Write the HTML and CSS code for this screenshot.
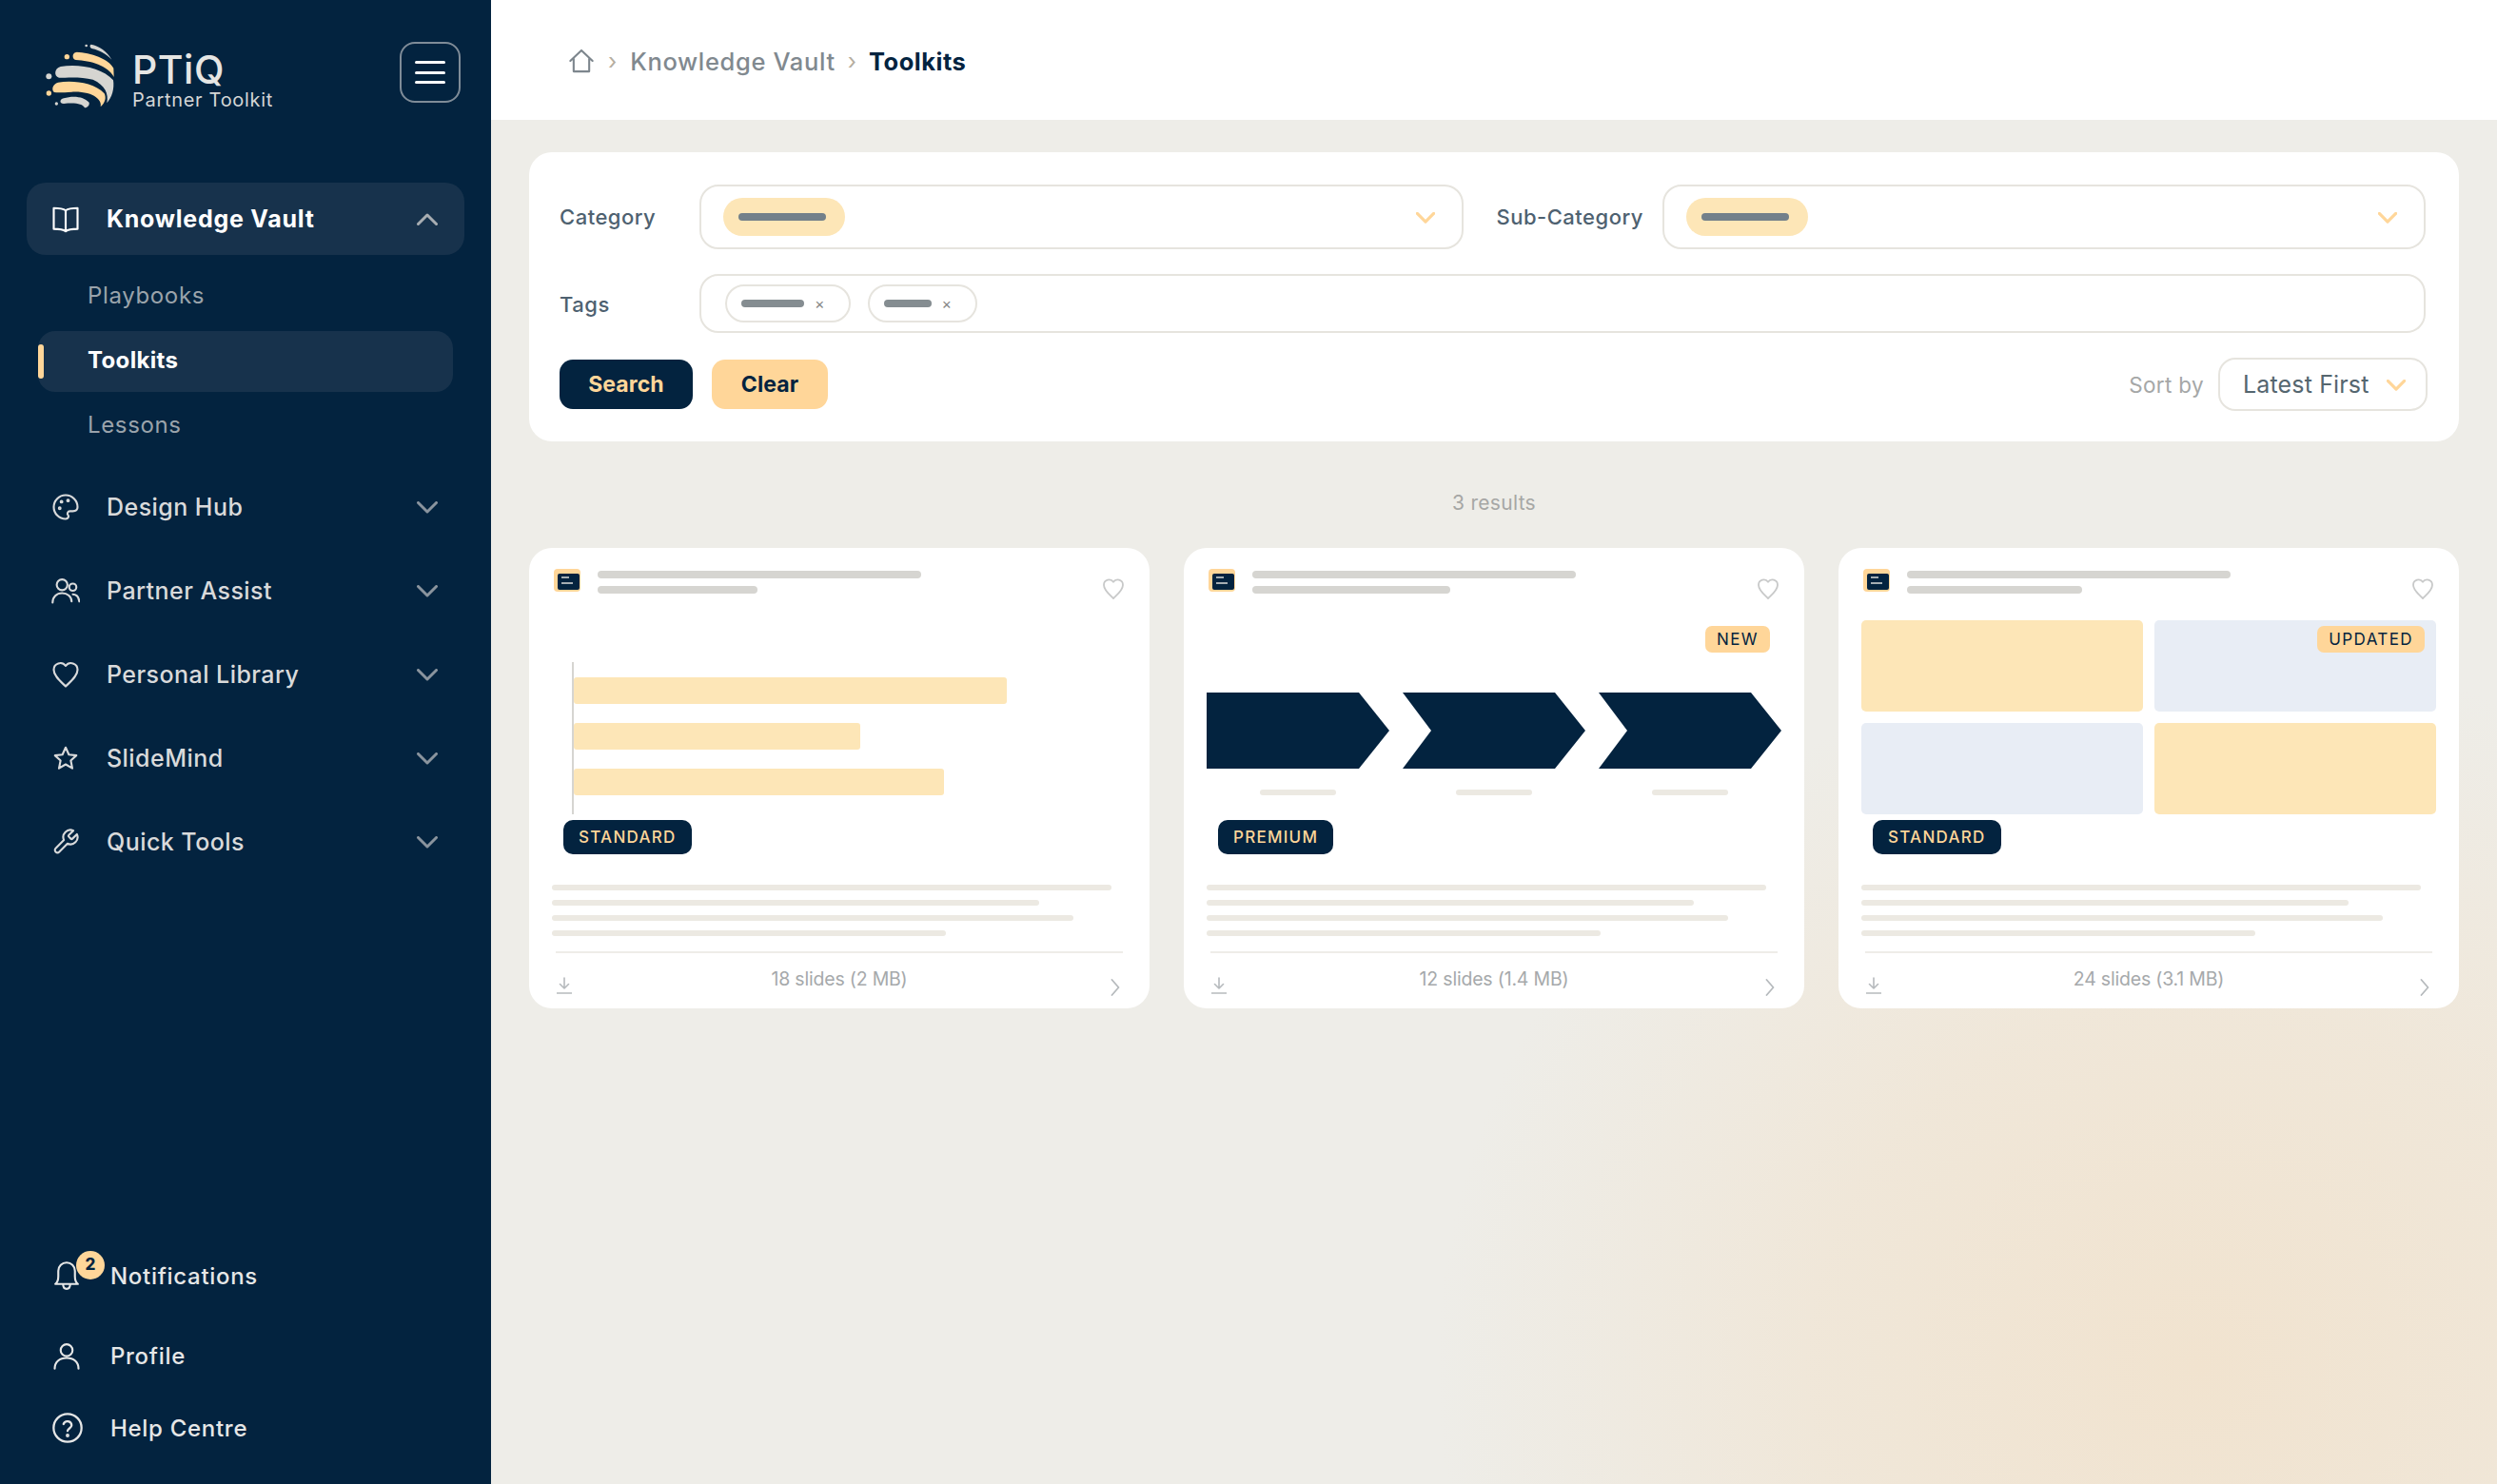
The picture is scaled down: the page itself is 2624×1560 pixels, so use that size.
FILE: index.html
```html
<!DOCTYPE html>
<html lang="en">
<head>
<meta charset="utf-8">
<title>PTiQ Partner Toolkit</title>
<link rel="stylesheet" href="styles.css">
</head>
<body>
<svg class="defs" width="0" height="0" aria-hidden="true">
  <symbol id="i-down" viewBox="0 0 22 13"><path d="M1.500 1.500l9.500 9.500 9.500-9.500"/></symbol>
  <symbol id="i-heart" viewBox="0 0 24 24"><path d="M12 22C8 18 2 13.500 2 8a5.500 5.500 0 0 1 10-3.200A5.500 5.500 0 0 1 22 8c0 5.500-6 10-10 14z"/></symbol>
  <symbol id="i-dl" viewBox="0 0 16 18"><path d="M8 1v10.500M3.500 7.500L8 12l4.500-4.500M.5 17h15"/></symbol>
  <symbol id="i-right" viewBox="0 0 10 18"><path d="M1.500 1l7 8-7 8"/></symbol>
  <symbol id="i-doc" viewBox="0 0 28 24"><rect width="28" height="24" rx="4" class="doc-o"/><rect x="4" y="5" width="23" height="17" rx="2" class="doc-i"/><rect x="8" y="8" width="8" height="2" class="doc-l"/><rect x="8" y="14" width="12" height="2" class="doc-l"/></symbol>
</svg>
<div class="app">
  <aside class="sidebar">
    <div class="brand">
      <svg class="logo" viewBox="80 80 222 210">
        <g class="lg"><path d="M226 85C252 90 276 106 291 133C272 114 250 103 231 99C223 97 220 88 226 85Z"/><path d="M130 155C185 145 262 158 296 198C300 225 292 252 276 270C282 240 270 214 232 196C195 186 150 190 125 190C108 186 110 160 130 155Z"/><path d="M140 255C170 245 205 250 220 268C222 276 215 284 206 285C200 272 175 268 140 272C126 272 126 258 140 255Z"/><circle cx="93" cy="186" r="9"/><circle cx="117" cy="272" r="5"/><circle cx="211" cy="89" r="4"/></g>
        <g class="lo"><path d="M180 109C225 111 282 130 297 160L298 188C280 152 225 136 178 134C165 132 166 110 180 110Z"/><path d="M122 205C170 198 235 205 268 240C274 252 272 268 256 282C262 262 235 232 165 235C140 237 120 238 110 236C100 228 105 210 122 205Z"/><circle cx="150" cy="124" r="8"/><circle cx="93" cy="239" r="8"/></g>
      </svg>
      <div class="brand-text"><div class="brand-name">PTiQ</div><div class="brand-sub">Partner Toolkit</div></div>
      <button class="menu-btn" aria-label="Menu"><span></span><span></span><span></span></button>
    </div>
    <nav class="nav">
      <a class="nav-item is-open">
        <svg class="ico" viewBox="0 0 24 24"><path d="M12 5C10 3.500 7 3 2 3v17.500c5 0 8 .5 10 2 2-1.500 5-2 10-2V3c-5 0-8 .5-10 2zM12 5v17"/></svg>
        <span class="nav-label">Knowledge Vault</span>
        <svg class="chev chev-up"><use href="#i-down"/></svg>
      </a>
      <div class="sub">
        <a class="sub-item">Playbooks</a>
        <a class="sub-item is-active">Toolkits</a>
        <a class="sub-item">Lessons</a>
      </div>
      <a class="nav-item">
        <svg class="ico" viewBox="0 0 24 24"><path d="M12 22a10 10 0 1 1 10-10c0 2.500-1.500 3.500-4 3.500h-2.500a2 2 0 0 0-1.500 3.300c.6.7.6 1.300.2 1.900-.4.700-1.100 1.300-2.200 1.300z"/><circle cx="7" cy="13" r=".7"/><circle cx="8.500" cy="7.500" r=".7"/><circle cx="14" cy="6.500" r=".7"/></svg>
        <span class="nav-label">Design Hub</span>
        <svg class="chev"><use href="#i-down"/></svg>
      </a>
      <a class="nav-item">
        <svg class="ico" viewBox="0 0 24 24"><circle cx="9" cy="7" r="4.500"/><circle cx="18" cy="9" r="3"/><path d="M1 22c0-5 3.500-8 8-8s8 3 8 7M18 15c3 0 5 2.500 5.500 6"/></svg>
        <span class="nav-label">Partner Assist</span>
        <svg class="chev"><use href="#i-down"/></svg>
      </a>
      <a class="nav-item">
        <svg class="ico" viewBox="0 0 24 24"><use href="#i-heart"/></svg>
        <span class="nav-label">Personal Library</span>
        <svg class="chev"><use href="#i-down"/></svg>
      </a>
      <a class="nav-item">
        <svg class="ico" viewBox="0 0 24 24"><path d="M12 3l2.700 6 6.300.7-4.700 4.300 1.300 6.500-5.600-3.300-5.600 3.300 1.300-6.500L3 9.700 9.300 9z"/></svg>
        <span class="nav-label">SlideMind</span>
        <svg class="chev"><use href="#i-down"/></svg>
      </a>
      <a class="nav-item">
        <svg class="ico" viewBox="0 0 24 24"><path d="M14.700 6.300a1 1 0 0 0 0 1.400l1.600 1.600a1 1 0 0 0 1.400 0l3.770-3.770a6 6 0 0 1-7.940 7.940l-6.910 6.910a2.120 2.120 0 0 1-3-3l6.910-6.910a6 6 0 0 1 7.940-7.940l-3.760 3.760z"/></svg>
        <span class="nav-label">Quick Tools</span>
        <svg class="chev"><use href="#i-down"/></svg>
      </a>
    </nav>
    <div class="foot-nav">
      <a class="foot-item foot-notif">
        <span class="bell-wrap">
          <svg class="ico" viewBox="0 0 24 24"><path d="M2.500 19c2-1.500 2.500-3 2.500-6.500V8a7 7 0 0 1 14 0v4.500c0 3.500.5 5 2.500 6.500zM9 19c0 5.500 6 5.500 6 0"/></svg>
          <span class="bell-badge">2</span>
        </span>
        <span>Notifications</span>
      </a>
      <a class="foot-item">
        <svg class="ico" viewBox="0 0 24 24"><circle cx="12" cy="7.500" r="5"/><path d="M2 23c0-5.500 4-9 10-9s10 3.500 10 9"/></svg>
        <span>Profile</span>
      </a>
      <a class="foot-item">
        <svg class="ico ico-help" viewBox="0 0 24 24"><circle cx="12" cy="12" r="11"/><path d="M8.800 9a3.300 3.300 0 0 1 6.400 1c0 2.200-3.200 2.500-3.200 4.500"/><circle cx="12" cy="18" r=".6"/></svg>
        <span>Help Centre</span>
      </a>
    </div>
  </aside>

  <main class="main">
    <header class="topbar">
      <svg class="home" viewBox="0 0 24 24"><path d="M2 12L12 2.500 22 12M5 10v11.500h14V10"/></svg>
      <span class="crumb-sep">›</span>
      <span class="crumb">Knowledge Vault</span>
      <span class="crumb-sep crumb-sep-b">›</span>
      <span class="crumb-now">Toolkits</span>
    </header>
    <div class="content">
      <section class="filters">
        <div class="frow frow-1">
          <label class="flabel flabel-a">Category</label>
          <div class="select">
            <span class="pill"><i class="pill-bar"></i></span>
            <svg class="schev"><use href="#i-down"/></svg>
          </div>
          <label class="flabel flabel-b">Sub-Category</label>
          <div class="select">
            <span class="pill"><i class="pill-bar"></i></span>
            <svg class="schev"><use href="#i-down"/></svg>
          </div>
        </div>
        <div class="frow frow-2">
          <label class="flabel flabel-a flabel-tags">Tags</label>
          <div class="tagbox">
            <span class="chip"><i class="chip-bar chip-bar-a"></i><span class="chip-x">×</span></span>
            <span class="chip"><i class="chip-bar chip-bar-b"></i><span class="chip-x">×</span></span>
          </div>
        </div>
        <div class="frow frow-3">
          <button class="btn btn-dark">Search</button>
          <button class="btn btn-light">Clear</button>
          <span class="sort-label">Sort by</span>
          <div class="sort">Latest First<svg class="schev"><use href="#i-down"/></svg></div>
        </div>
      </section>

      <div class="results">3 results</div>

      <section class="cards">
        <article class="card">
          <div class="card-head">
            <svg class="doc"><use href="#i-doc"/></svg>
            <div class="titles"><i class="t1"></i><i class="t2 t2-a"></i></div>
            <svg class="fav"><use href="#i-heart"/></svg>
          </div>
          <div class="preview">
            <div class="chart">
              <i class="bar" style="width:455px"></i>
              <i class="bar" style="width:301px"></i>
              <i class="bar" style="width:389px"></i>
            </div>
          </div>
          <span class="type">STANDARD</span>
          <div class="lines"><i class="l1"></i><i class="l2"></i><i class="l3"></i><i class="l4"></i></div>
          <div class="card-foot">
            <svg class="dl"><use href="#i-dl"/></svg>
            <span class="meta">18 slides (2 MB)</span>
            <svg class="go"><use href="#i-right"/></svg>
          </div>
        </article>

        <article class="card">
          <div class="card-head">
            <svg class="doc"><use href="#i-doc"/></svg>
            <div class="titles"><i class="t1"></i><i class="t2 t2-b"></i></div>
            <svg class="fav"><use href="#i-heart"/></svg>
          </div>
          <div class="preview preview-flow">
            <span class="status">NEW</span>
            <div class="step"><i class="arrow arrow-first"></i><i class="step-label"></i></div>
            <div class="step"><i class="arrow"></i><i class="step-label"></i></div>
            <div class="step"><i class="arrow"></i><i class="step-label"></i></div>
          </div>
          <span class="type">PREMIUM</span>
          <div class="lines"><i class="l1"></i><i class="l2"></i><i class="l3"></i><i class="l4"></i></div>
          <div class="card-foot">
            <svg class="dl"><use href="#i-dl"/></svg>
            <span class="meta">12 slides (1.4 MB)</span>
            <svg class="go"><use href="#i-right"/></svg>
          </div>
        </article>

        <article class="card">
          <div class="card-head">
            <svg class="doc"><use href="#i-doc"/></svg>
            <div class="titles"><i class="t1"></i><i class="t2 t2-c"></i></div>
            <svg class="fav"><use href="#i-heart"/></svg>
          </div>
          <div class="preview preview-grid">
            <span class="status">UPDATED</span>
            <i class="cell cell-y"></i><i class="cell cell-b"></i>
            <i class="cell cell-b"></i><i class="cell cell-y"></i>
          </div>
          <span class="type">STANDARD</span>
          <div class="lines"><i class="l1"></i><i class="l2"></i><i class="l3"></i><i class="l4"></i></div>
          <div class="card-foot">
            <svg class="dl"><use href="#i-dl"/></svg>
            <span class="meta">24 slides (3.1 MB)</span>
            <svg class="go"><use href="#i-right"/></svg>
          </div>
        </article>
      </section>
    </div>
  </main>
</div>
</body>
</html>
```
FILE: styles.css
```css
* { box-sizing: border-box; }
html, body { margin: 0; height: 100%; }
body { font-family: "Inter", "Liberation Sans", sans-serif; color: #03233f; }
i { display: block; font-style: normal; }
a { display: flex; }
button { font-family: inherit; border: 0; padding: 0; }
.defs { position: absolute; }

.app { display: flex; width: 2624px; height: 1560px; overflow: hidden; }

/* sidebar */
.sidebar { width: 516px; flex: none; background: #03233f; display: flex; flex-direction: column; color: #d9dadb; }
.brand { display: flex; align-items: center; height: 192px; padding: 0 32px 40px 47px; }
.logo { width: 74px; height: 70px; flex: none; margin-top: 7px; }
.lg { fill: #d6d5d1; }
.lo { fill: #ffd699; }
.brand-text { margin-left: 18px; flex: 1; padding-top: 18px; }
.brand-name { font-size: 41px; line-height: 38px; font-weight: 500; color: #e6e6e4; letter-spacing: .5px; }
.brand-sub { font-size: 20px; line-height: 24px; color: #d4d6d6; letter-spacing: .7px; margin-top: 1px; }
.menu-btn { width: 64px; height: 64px; background: transparent; border: 2px solid #7f8c98; border-radius: 16px; display: flex; flex-direction: column; align-items: center; justify-content: center; gap: 7.500px; }
.menu-btn span { display: block; width: 32px; height: 3px; background: #fff; border-radius: 2px; }

.nav { padding: 0 28px; display: flex; flex-direction: column; gap: 12px; }
.nav-item { height: 76px; align-items: center; padding: 0 28px 0 26px; border-radius: 20px; font-size: 25px; font-weight: 500; letter-spacing: .45px; color: #d9dadb; }
.nav-item.is-open { background: #17324c; color: #fff; font-weight: 700; letter-spacing: .75px; }
.ico { width: 30px; height: 30px; flex: none; fill: none; stroke: currentColor; stroke-width: 1.700; stroke-linecap: round; stroke-linejoin: round; }
.nav-label { margin-left: 28px; flex: 1; }
.chev { width: 22px; height: 13px; flex: none; fill: none; stroke: #8a949e; stroke-width: 3; stroke-linecap: round; stroke-linejoin: round; overflow: visible; }
.chev-up { stroke: #a8adb2; transform: rotate(180deg); }
.sub { display: flex; flex-direction: column; gap: 4px; margin-top: -12px; padding: 12px 12px 3px; }
.sub-item { height: 64px; align-items: center; padding: 0 0 4px 52px; font-size: 24px; letter-spacing: .65px; color: #9aa3ab; border-radius: 18px; position: relative; }
.sub-item.is-active { background: #17324c; color: #fff; font-weight: 700; letter-spacing: .35px; }
.sub-item.is-active::before { content: ""; position: absolute; left: 0; top: 14px; width: 6px; height: 36px; border-radius: 3px; background: #ffd699; }

.foot-nav { margin-top: auto; padding: 0 0 21px 55px; display: flex; flex-direction: column; }
.foot-item { height: 76px; align-items: center; gap: 31px; font-size: 24px; letter-spacing: .7px; color: #e6e7e7; font-weight: 500; }
.foot-notif { height: 92px; }
.bell-wrap { position: relative; display: block; height: 30px; }
.bell-badge { position: absolute; left: 25px; top: -11px; width: 30px; height: 30px; border-radius: 50%; background: #ffd699; color: #03233f; font-size: 17px; font-weight: 800; letter-spacing: 0; display: flex; align-items: center; justify-content: center; padding-bottom: 3px; }
.ico-help { width: 32px; height: 32px; margin-right: -2px; }

/* main */
.main { flex: 1; min-width: 0; display: flex; flex-direction: column; background: #eeede8 radial-gradient(ellipse 800px 760px at 1794px 1437px, #f1e3cf 0%, rgba(241, 227, 207, 0.62) 50%, rgba(241, 227, 207, 0) 100%); }
.topbar { height: 126px; flex: none; background: #fff; display: flex; align-items: center; padding: 3px 0 0 81px; }
.home { width: 28px; height: 28px; fill: none; stroke: #7d868d; stroke-width: 1.800; stroke-linejoin: round; stroke-linecap: round; margin-top: -1px; }
.crumb-sep { color: #b6aea0; font-size: 24px; margin: 0 14px; }
.crumb-sep-b { margin: 0 13px; }
.crumb { font-size: 25.500px; color: #81898f; letter-spacing: .65px; font-weight: 500; }
.crumb-now { font-size: 25.500px; font-weight: 700; color: #03233f; letter-spacing: .5px; }
.content { padding: 34px 40px 0; }

.filters { background: #fff; border-radius: 24px; padding: 34px 35px 32px 32px; display: flex; flex-direction: column; gap: 26px; }
.frow { display: flex; align-items: center; }
.flabel { font-size: 22px; color: #4e6170; font-weight: 500; letter-spacing: .5px; }
.flabel-a { width: 147px; flex: none; }
.flabel-b { width: 174px; flex: none; margin-left: 35px; }
.flabel-tags { padding-top: 2px; }
.select { flex: 1; height: 68px; border: 2px solid #e6e4de; border-radius: 20px; display: flex; align-items: center; justify-content: space-between; padding: 0 28px 0 23px; }
.select .schev { margin-top: 2px; }
.pill { width: 128px; height: 40px; background: #fde6b7; border-radius: 20px; display: flex; align-items: center; padding-left: 16px; }
.pill-bar { width: 92px; height: 8px; border-radius: 4px; background: #73808a; margin-top: -1px; }
.schev { width: 20px; height: 12px; fill: none; stroke: #ffd699; stroke-width: 3.500; stroke-linecap: round; stroke-linejoin: round; flex: none; overflow: visible; }
.tagbox { flex: 1; height: 62px; border: 2px solid #e6e4de; border-radius: 20px; display: flex; align-items: center; gap: 18px; padding: 0 0 0 25px; }
.chip { height: 40px; border: 2px solid #e6e4de; border-radius: 20px; display: flex; align-items: center; padding: 0 25px 0 15px; gap: 11px; }
.chip-bar { height: 8px; border-radius: 4px; background: #858d91; }
.chip-bar-a { width: 66px; }
.chip-bar-b { width: 50px; }
.chip-x { font-size: 16px; line-height: 16px; color: #888; }
.frow-3 { height: 56px; }
.btn { height: 52px; border-radius: 14px; font-size: 23px; font-weight: 700; letter-spacing: .1px; }
.btn-dark { width: 140px; background: #03233f; color: #ffd699; }
.btn-light { width: 122px; background: #ffd699; color: #03233f; margin-left: 20px; }
.sort-label { margin-left: auto; font-size: 22.500px; color: #a5a7a7; letter-spacing: .35px; margin-right: 15px; }
.sort { width: 220px; height: 56px; margin-right: -2px; border: 2px solid #e6e4de; border-radius: 18px; display: flex; align-items: center; justify-content: space-between; padding: 0 21px 0 24px; font-size: 25px; color: #55666f; letter-spacing: .15px; }
.sort .schev { margin-top: 2px; }

.results { height: 112px; padding-top: 16px; display: flex; align-items: center; justify-content: center; font-size: 21px; color: #a6a7a5; letter-spacing: .3px; }

.cards { display: grid; grid-template-columns: repeat(3, 652px); gap: 36px; }
.card { height: 484px; background: #fff; border-radius: 24px; display: flex; flex-direction: column; align-items: flex-start; }
.card-head { width: 100%; height: 76px; padding: 22px 26px 0 26px; display: flex; }
.doc { width: 28px; height: 24px; flex: none; }
.doc-o { fill: #ffd699; }
.doc-i { fill: #03233f; }
.doc-l { fill: #a5adb2; }
.titles { margin-left: 18px; padding-top: 2px; flex: 1; display: flex; flex-direction: column; gap: 8px; }
.titles i { height: 8px; border-radius: 4px; background: #d6d5d1; }
.t1 { width: 340px; }
.t2-a { width: 168px; }
.t2-b { width: 208px; }
.t2-c { width: 184px; }
.fav { width: 24px; height: 24px; flex: none; margin: 9px 0 0; fill: none; stroke: #c8c9c9; stroke-width: 1.800; stroke-linejoin: round; }

.preview { position: relative; width: 604px; height: 204px; margin-left: 24px; flex: none; }
.chart { margin: 44px 0 0 21px; height: 160px; border-left: 2px solid #d6d5d1; padding-top: 16px; display: flex; flex-direction: column; gap: 20px; }
.bar { height: 28px; background: #fde6b7; border-radius: 3px; }
.preview-flow { display: flex; gap: 14px; padding-top: 76px; }
.step { width: 192px; flex: none; display: flex; flex-direction: column; align-items: center; gap: 22px; }
.arrow { width: 192px; height: 80px; background: #03233f; clip-path: polygon(0 0, 160px 0, 192px 50%, 160px 100%, 0 100%, 30px 50%); }
.arrow-first { clip-path: polygon(0 0, 160px 0, 192px 50%, 160px 100%, 0 100%); }
.step-label { width: 80px; height: 6px; border-radius: 3px; background: #ece9e2; }
.preview-grid { display: grid; grid-template-columns: 1fr 1fr; grid-template-rows: 1fr 1fr; gap: 12px; }
.cell { border-radius: 5px; }
.cell-y { background: #fde6b7; }
.cell-b { background: #e8edf5; }
.status { position: absolute; top: 6px; right: 12px; height: 28px; padding: 0 12px; border-radius: 7px; background: #ffd699; color: #03233f; font-size: 17px; font-weight: 400; letter-spacing: 1.400px; display: flex; align-items: center; z-index: 1; }
.type { margin: 6px 0 0 36px; height: 36px; padding: 0 16px; border-radius: 10px; background: #03233f; color: #ffd699; font-size: 17px; font-weight: 500; letter-spacing: 1.250px; display: flex; align-items: center; }
.lines { margin: 32px 0 0 24px; display: flex; flex-direction: column; gap: 10px; }
.lines i { height: 6px; border-radius: 3px; background: #ece9e2; }
.l1 { width: 588px; }
.l2 { width: 512px; }
.l3 { width: 548px; }
.l4 { width: 414px; }
.card-foot { width: 596px; margin: 16px 0 0 28px; border-top: 2px solid #eeede8; flex: 1; display: grid; grid-template-columns: 24px 1fr 24px; align-items: center; }
.meta { text-align: center; font-size: 19.500px; letter-spacing: -.2px; color: #a6a9ab; margin-top: -5px; }
.dl { width: 16px; height: 18px; margin: 10px 0 0 1px; fill: none; stroke: #b6babd; stroke-width: 1.600; stroke-linecap: round; stroke-linejoin: round; }
.go { width: 10px; height: 18px; margin: 14px 0 0 11px; fill: none; stroke: #b6babd; stroke-width: 1.800; stroke-linecap: round; stroke-linejoin: round; overflow: visible; }
```
